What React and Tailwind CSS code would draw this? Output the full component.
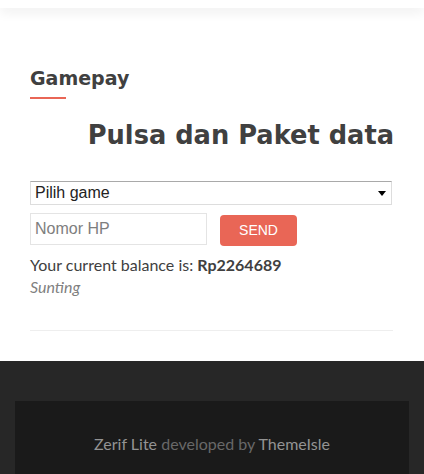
export default function App() {
    return (
        <div className="w-[424px] h-[474px] overflow-hidden bg-white font-['Lato',sans-serif]">
            <div className="h-[8px] bg-white shadow-[0_4px_12px_rgba(0,0,0,0.08)] relative z-10" />

            <div className="px-[30px] pt-[58px]">
                <h2 className="font-['DejaVu_Sans',sans-serif] font-bold text-[19px] leading-[24px] text-[#404040]">Gamepay</h2>
                <div className="w-[36px] h-[2px] bg-[#e96656] mt-[7px]" />

                <h1 className="mt-[20px] text-right font-['DejaVu_Sans',sans-serif] font-bold text-[25.7px] leading-[32px] text-[#404040]">
                    Pulsa dan Paket data
                </h1>

                <div className="mt-[30px] mr-[2px] relative h-[24px] border border-[#a9a9a9] border-b-[#ddd] border-x-[#ddd] flex items-center pl-[4px] font-['Liberation_Sans',sans-serif] text-[16px] text-[#222]">
                    Pilih game
                    <span className="absolute right-[5px] top-[9px] w-0 h-0 border-l-[4px] border-r-[4px] border-t-[5px] border-l-transparent border-r-transparent border-t-black" />
                </div>

                <div className="mt-[8px] flex items-start gap-[13px]">
                    <div className="w-[177px] h-[32px] border border-[#e4e4e4] flex items-center pl-[4px] font-['Liberation_Sans',sans-serif] text-[16px] text-[#7e7e7e]">
                        Nomor HP
                    </div>
                    <button className="mt-[2px] w-[77px] h-[31px] rounded-[4px] bg-[#e96656] text-white font-['Liberation_Sans',sans-serif] text-[14px]">
                        SEND
                    </button>
                </div>

                <p className="mt-[8px] text-[16px] leading-[22px] text-[#404040]">
                    Your current balance is: <b className="font-bold">Rp2264689</b>
                </p>
                <p className="text-[16px] leading-[22px] italic text-[#808080]">Sunting</p>

                <div className="mt-[32px] h-[1px] bg-[#eeeeee] mr-[1px]" />
            </div>

            <div className="mt-[30px] bg-[#272727] pt-[40px] px-[15px]">
                <div className="bg-[#1a1a1a] h-[80px] pt-[32px] text-center text-[16px] leading-[22px]">
                    <span className="text-[#939393]">Zerif Lite</span>{" "}
                    <span className="text-[#686868]">developed by</span>{" "}
                    <span className="text-[#939393]">ThemeIsle</span>
                </div>
            </div>
        </div>
    );
}
